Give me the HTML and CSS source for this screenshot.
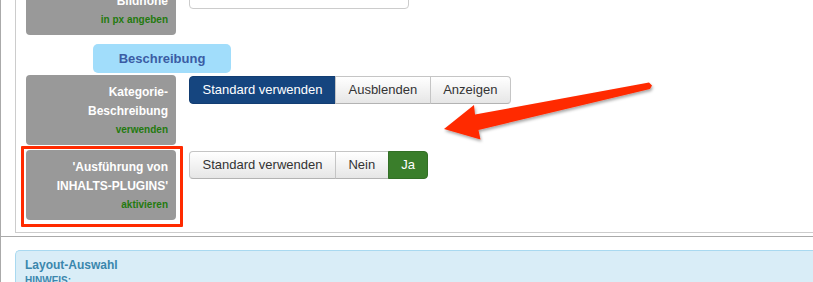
FILE: index.html
```html
<!DOCTYPE html>
<html lang="de">
<head>
<meta charset="utf-8">
<title>Kategorie-Optionen</title>
<link rel="stylesheet" href="styles.css">
</head>
<body>
<div class="page">
  <div class="fieldset">
    <div class="row row-first">
      <div class="label">
        <span class="label-main">Bildhöhe</span>
        <span class="label-sub">in px angeben</span>
      </div>
      <div class="controls">
        <div class="input"></div>
      </div>
    </div>

    <div class="badge">Beschreibung</div>

    <div class="row">
      <div class="label">
        <span class="label-main">Kategorie-<br>Beschreibung</span>
        <span class="label-sub">verwenden</span>
      </div>
      <div class="controls">
        <div class="btn-group">
          <span class="btn btn-primary">Standard verwenden</span>
          <span class="btn">Ausblenden</span>
          <span class="btn">Anzeigen</span>
        </div>
      </div>
    </div>

    <div class="row row-marked">
      <div class="label">
        <span class="label-main">'Ausführung von<br>INHALTS-PLUGINS'</span>
        <span class="label-sub">aktivieren</span>
      </div>
      <div class="controls">
        <div class="btn-group">
          <span class="btn">Standard verwenden</span>
          <span class="btn">Nein</span>
          <span class="btn btn-success">Ja</span>
        </div>
      </div>
      <div class="highlight"></div>
    </div>
  </div>

  <div class="section">
    <div class="info">
      <div class="info-title">Layout-Auswahl</div>
      <div class="info-note">HINWEIS:</div>
    </div>
  </div>

  <svg class="arrow" width="813" height="282" viewBox="0 0 813 282" aria-hidden="true">
    <defs>
      <filter id="sh" x="-10%" y="-30%" width="120%" height="160%">
        <feDropShadow dx="1" dy="2" stdDeviation="1.5" flood-color="#000" flood-opacity="0.35"/>
      </filter>
    </defs>
    <polygon filter="url(#sh)" fill="#ff2a00"
      points="649,117.5 652,120.5 650,124 478.5,165 480.5,174.5 444,164 474,140 475,149.5"/>
  </svg>
</div>
</body>
</html>
```

FILE: styles.css
```css
html, body {
  margin: 0;
  padding: 0;
  background: #fff;
  height: 100%;
  overflow: hidden;
}

body {
  font-family: "Liberation Sans", Arial, Helvetica, sans-serif;
  color: #333;
}

.page {
  position: relative;
  border-left: 1px solid #aaa;
  min-height: 100%;
  box-sizing: border-box;
}

.fieldset {
  margin-left: 14px;
  margin-top: -35px;
  border-left: 1px solid #ccc;
  border-bottom: 1px solid #ccc;
  padding: 0 0 12px 10px;
}

.row {
  position: relative;
  display: flex;
  gap: 13px;
  margin-top: 5px;
}

.row-first {
  margin-top: 0;
}

.badge + .row {
  margin-top: 2px;
}

.label {
  width: 150px;
  height: 70px;
  box-sizing: border-box;
  padding: 0 8px 7px 8px;
  background: #999;
  border-radius: 4px;
  text-align: right;
  display: flex;
  flex-direction: column;
  justify-content: flex-end;
}

.label-main {
  color: #fff;
  font-weight: bold;
  font-size: 12px;
  line-height: 19px;
}

.label-sub {
  color: #237a0e;
  font-weight: bold;
  font-size: 10px;
  line-height: 17px;
}

.controls {
  padding-top: 1px;
}

.row-first .controls {
  padding-top: 14px;
}

.input {
  width: 218px;
  height: 28px;
  border: 1px solid #ccc;
  border-radius: 4px;
  background: #fff;
}

.badge {
  margin: 9px 0 0 67px;
  width: 138px;
  height: 29px;
  line-height: 29px;
  text-align: center;
  background: #a1ddfb;
  border-radius: 5px;
  color: #3a5ca4;
  font-weight: bold;
  font-size: 13px;
}

.btn-group {
  display: flex;
}

.btn {
  display: block;
  padding: 4px 12.5px;
  font-size: 13px;
  line-height: 18px;
  color: #333;
  background: linear-gradient(#ffffff, #e6e6e6);
  border: 1px solid #c5c5c5;
  border-bottom-color: #b3b3b3;
  margin-left: -1px;
}

.btn:first-child {
  margin-left: 0;
  border-radius: 4px 0 0 4px;
}

.btn:last-child {
  border-radius: 0 4px 4px 0;
}

.btn-primary {
  background: #15457f;
  border-color: #123d72;
  color: #fff;
}

.btn-success {
  background: #3a7e2b;
  border-color: #336f26;
  color: #fff;
}

.highlight {
  position: absolute;
  left: -5px;
  top: -4px;
  width: 156px;
  height: 75px;
  border: 3px solid #ff2a00;
  border-radius: 1px;
}

.section {
  margin-top: 3px;
  border-top: 1px solid #aaa;
  padding: 13px 0 0 14px;
}

.info {
  background: #d9edf7;
  border: 1px solid #a9d9f0;
  border-right: none;
  border-radius: 5px 0 0 0;
  padding: 6px 9px 0;
  height: 40px;
}

.info-title {
  color: #3a87ad;
  font-weight: bold;
  font-size: 12px;
  line-height: 16px;
}

.info-note {
  color: #3a87ad;
  font-weight: bold;
  font-size: 10px;
  line-height: 16px;
}

.arrow {
  position: absolute;
  left: -1px;
  top: 0;
  pointer-events: none;
}
```
